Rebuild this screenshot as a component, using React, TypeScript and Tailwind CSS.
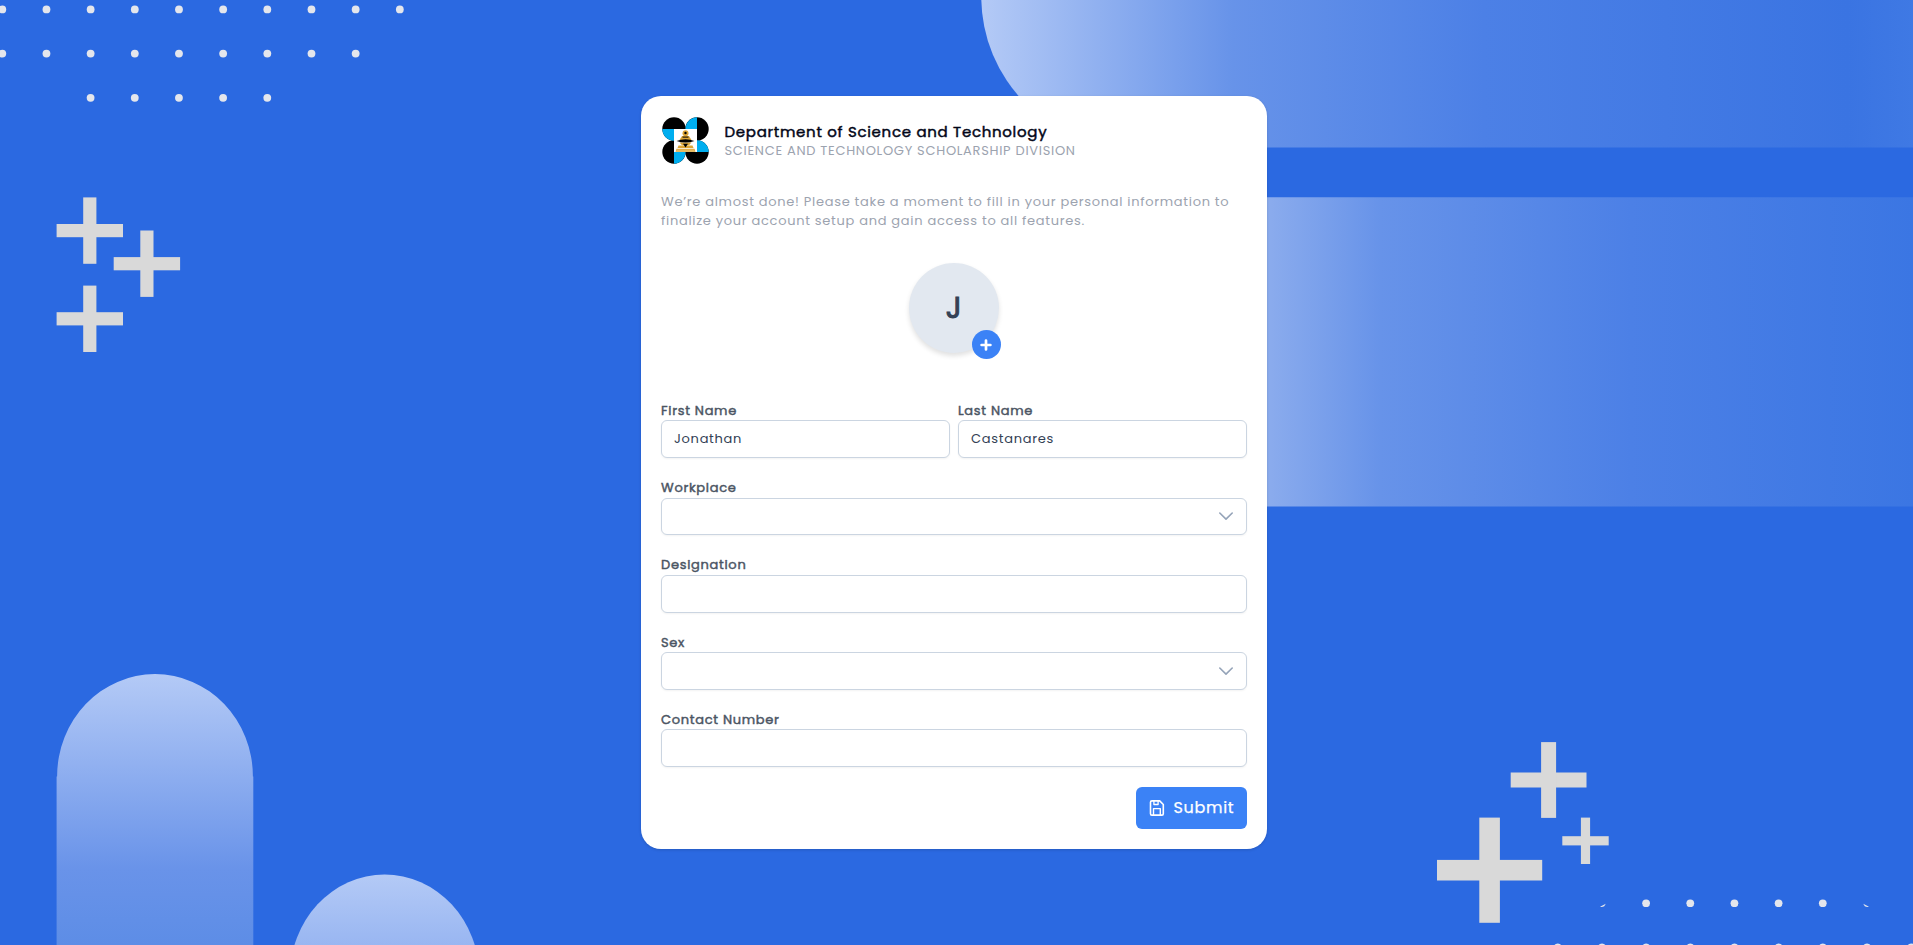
import type { ReactNode } from 'react';

const DOT_PITCH = 44.17;

function Dots({ x, y, count }: { x: number; y: number; count: number }) {
  return (
    <g fill="#e4e6ec">
      {Array.from({ length: count }, (_, i) => (
        <circle key={i} cx={x + i * DOT_PITCH} cy={y} r="3.9" />
      ))}
    </g>
  );
}

function Cross({ cx, cy, size, bar }: { cx: number; cy: number; size: number; bar: number }) {
  return (
    <g fill="#d9d9d9">
      <rect x={cx - size / 2} y={cy - bar / 2} width={size} height={bar} />
      <rect x={cx - bar / 2} y={cy - size / 2} width={bar} height={size} />
    </g>
  );
}

function Backdrop() {
  return (
    <svg
      className="absolute inset-0 h-full w-full"
      viewBox="0 0 1913 945"
      preserveAspectRatio="none"
      aria-hidden="true"
    >
      <defs>
        <linearGradient id="bar1" gradientUnits="userSpaceOnUse" x1="981" y1="0" x2="1913" y2="0">
          <stop offset="0" stopColor="#b4caf6" />
          <stop offset="0.27" stopColor="#6793e9" />
          <stop offset="0.54" stopColor="#4c80e6" />
          <stop offset="0.93" stopColor="#3a74e2" />
          <stop offset="1" stopColor="#3f79e4" />
        </linearGradient>
        <linearGradient id="bar2" gradientUnits="userSpaceOnUse" x1="1130" y1="0" x2="1913" y2="0">
          <stop offset="0" stopColor="#b4caf6" />
          <stop offset="0.18" stopColor="#8aabed" />
          <stop offset="0.32" stopColor="#6793e9" />
          <stop offset="0.64" stopColor="#4c80e6" />
          <stop offset="1" stopColor="#3b76e3" />
        </linearGradient>
        <linearGradient id="pillar1" gradientUnits="userSpaceOnUse" x1="0" y1="674" x2="0" y2="945">
          <stop offset="0" stopColor="#b4caf6" />
          <stop offset="0.72" stopColor="#6993e9" />
          <stop offset="1" stopColor="#5d8de6" />
        </linearGradient>
        <linearGradient id="pillar2" gradientUnits="userSpaceOnUse" x1="0" y1="874" x2="0" y2="1070">
          <stop offset="0" stopColor="#b4caf6" />
          <stop offset="1" stopColor="#6993e9" />
        </linearGradient>
        <clipPath id="dotClip">
          <rect x="1610" y="890" width="250" height="17" />
        </clipPath>
      </defs>

      <Dots x={2.3} y={9.4} count={10} />
      <Dots x={2.3} y={53.6} count={9} />
      <Dots x={90.6} y={97.8} count={5} />

      <Cross cx={89.8} cy={230.6} size={66.4} bar={13.2} />
      <Cross cx={146.9} cy={263.7} size={66.4} bar={13.2} />
      <Cross cx={89.8} cy={318.8} size={66.4} bar={13.2} />

      <Cross cx={1548.6} cy={780} size={75.8} bar={15} />
      <Cross cx={1489.6} cy={870.2} size={105.2} bar={20.6} />
      <Cross cx={1585.5} cy={840.8} size={46.4} bar={9.2} />

      <g clipPath="url(#dotClip)">
        <Dots x={1646.1} y={903.3} count={5} />
      </g>
      <path d="M1600 906.800L1605.800 903.800L1604.200 906.200Q1602.500 907.200 1600 906.800Z" fill="#e4e6ec" />
      <path d="M1869 906.800L1863.200 903.800L1864.800 906.200Q1866.500 907.200 1869 906.800Z" fill="#e4e6ec" />
      <Dots x={1557.8} y={947.4} count={9} />

      <path d="M981.300 -3A151 150.500 0 0 0 1132.300 147.500H1913V-3Z" fill="url(#bar1)" />
      <path d="M1200 197.300H1913V506.600H1200Z" fill="url(#bar2)" />

      <path d="M56.600 776.500H57.100A97.900 102.400 0 0 1 252.900 776.500H253.300V945H56.600Z" fill="url(#pillar1)" />
      <path d="M289.800 976.400A94.800 102 0 0 1 479.400 976.400Z" fill="url(#pillar2)" />
    </svg>
  );
}

function Logo() {
  return (
    <svg className="mt-px size-[47px] shrink-0" viewBox="0 0 47 47" aria-hidden="true">
      <circle cx="12" cy="12" r="11.700" fill="#000" />
      <circle cx="35" cy="12" r="11.700" fill="#000" />
      <circle cx="12" cy="35" r="11.700" fill="#000" />
      <circle cx="35" cy="35" r="11.700" fill="#000" />
      <g fill="#00aeef">
        <path d="M.3 12A11.700 11.700 0 0 0 12 23.700V12Z" />
        <path d="M35 .3A11.700 11.700 0 0 0 23.500 12H35Z" />
        <path d="M12 23.300A11.700 11.700 0 0 1 23.500 35A11.700 11.700 0 0 1 12 46.700Z" />
        <path d="M35 23.300A11.700 11.700 0 0 1 46.700 35H23.500A11.700 11.700 0 0 1 35 23.300Z" />
      </g>
      <rect x="12" y="12" width="23" height="23" fill="#fff" />
      <g fill="#dda535">
        <circle cx="23.500" cy="16.200" r="3" />
        <path d="M20 19H27L29.500 23H17.500Z" />
        <path d="M17.500 25.500H29.500L27 28.300H20Z" />
        <path d="M16.500 28.600H30.500L31.500 31H15.500Z" />
        <path d="M14.500 31.800H32.500L33.500 34.700H13.500Z" />
      </g>
      <g fill="#000">
        <circle cx="23.500" cy="16" r="1.200" />
        <path d="M20.500 19.600H26.500V20.600H20.500Z" />
        <path d="M14.500 23.900Q23.500 20.600 32.500 23.900Q23.500 27.200 14.500 23.900Z" />
        <path d="M21 26.800H26L23.500 30.500Z" />
      </g>
      <path d="M14.500 33.200H32.500" stroke="#f7e3b5" strokeWidth=".5" />
    </svg>
  );
}

function ChevronDown() {
  return (
    <svg className="mr-px size-3.5" viewBox="0 0 14 14" fill="none" aria-hidden="true">
      <path
        d="M.8 4L7 10.100L13.200 4"
        stroke="#94a3b8"
        strokeWidth="1.600"
        strokeLinecap="round"
        strokeLinejoin="round"
      />
    </svg>
  );
}

function SaveIcon() {
  return (
    <svg className="size-4" viewBox="0 0 16 16" fill="none" stroke="#fff" strokeWidth="1.600" strokeLinejoin="round" aria-hidden="true">
      <path d="M2.800 .9H10.700L14.300 4.500V13.700Q14.300 15.100 12.900 15.100H2.900Q1.500 15.100 1.500 13.700V2.300Q1.500 .9 2.900 .9Z" />
      <path d="M4.900 1V4.500H9.100V1" strokeWidth="1.300" />
      <path d="M4.500 15V8.600H11.300V15" strokeWidth="1.400" />
    </svg>
  );
}

const box =
  'flex h-[37.75px] w-full items-center rounded-md border border-[#cbd5e1] bg-white px-3 text-[13px] text-[#334155] shadow-[0_1px_2px_rgba(18,18,23,0.05)]';

function Field({ label, children }: { label: string; children: ReactNode }) {
  return (
    <div className="flex flex-1 flex-col">
      <span className="block h-[19.5px] text-[13px] leading-[19.5px] text-[#4b5563] [-webkit-text-stroke:0.45px_#4b5563]">
        {label}
      </span>
      {children}
    </div>
  );
}

export default function App() {
  return (
    <main className="relative flex h-[945px] w-full items-center overflow-hidden bg-[#2b69e1] font-['Poppins','Inter',sans-serif] tracking-[0.7px]">
      <Backdrop />
      <section className="relative ml-[641px] flex h-[753px] w-[626px] flex-col rounded-[20px] bg-white p-5 shadow-[0_1px_3px_rgba(0,0,0,0.15)]">
        <header className="flex h-[47px] items-center gap-4 pl-[0.5px]">
          <Logo />
          <div className="mt-0.5 flex flex-col">
            <h1 className="h-5 text-[15px] leading-5 whitespace-nowrap text-[#020617] [-webkit-text-stroke:0.45px_#020617]">
              Department of Science and Technology
            </h1>
            <p className="h-[17px] text-[13px] leading-[17px] whitespace-nowrap text-[#9ca3af]">
              SCIENCE AND TECHNOLOGY SCHOLARSHIP DIVISION
            </p>
          </div>
        </header>

        <p className="mt-[28.5px] text-[13px] leading-[19.5px] whitespace-nowrap text-[#9ca3af]">
          We’re almost done! Please take a moment to fill in your personal information to
          <br />
          finalize your account setup and gain access to all features.
        </p>

        <div className="mt-[32.5px] flex justify-center">
          <div className="relative flex size-[90px] items-center justify-center rounded-full bg-[#e2e8f0] shadow-[0_3px_5px_rgba(0,0,0,0.12)]">
            <span className="text-[30px] leading-none text-[#334155] [-webkit-text-stroke:1px_#334155]">J</span>
            <button className="absolute top-[67px] left-[62.500px] flex size-[29px] items-center justify-center rounded-full bg-[#3b82f6]">
              <svg className="size-3" viewBox="0 0 12 12" stroke="#fff" strokeWidth="2.700" strokeLinecap="round">
                <path d="M6 1.600V10.400M1.600 6H10.400" />
              </svg>
            </button>
          </div>
        </div>

        <form className="mt-[47.8px] flex flex-col gap-5">
          <div className="flex gap-2">
            <Field label="First Name">
              <div className={box}>Jonathan</div>
            </Field>
            <Field label="Last Name">
              <div className={box}>Castanares</div>
            </Field>
          </div>
          <Field label="Workplace">
            <div className={`${box} justify-end`}>
              <ChevronDown />
            </div>
          </Field>
          <Field label="Designation">
            <div className={box} />
          </Field>
          <Field label="Sex">
            <div className={`${box} justify-end`}>
              <ChevronDown />
            </div>
          </Field>
          <Field label="Contact Number">
            <div className={box} />
          </Field>
          <button
            type="button"
            className="flex h-[42px] w-[111px] items-center gap-[8.500px] self-end rounded-md bg-[#3b82f6] pl-[13px] text-base text-white [-webkit-text-stroke:0.25px_#fff]"
          >
            <SaveIcon />
            Submit
          </button>
        </form>
      </section>
    </main>
  );
}
